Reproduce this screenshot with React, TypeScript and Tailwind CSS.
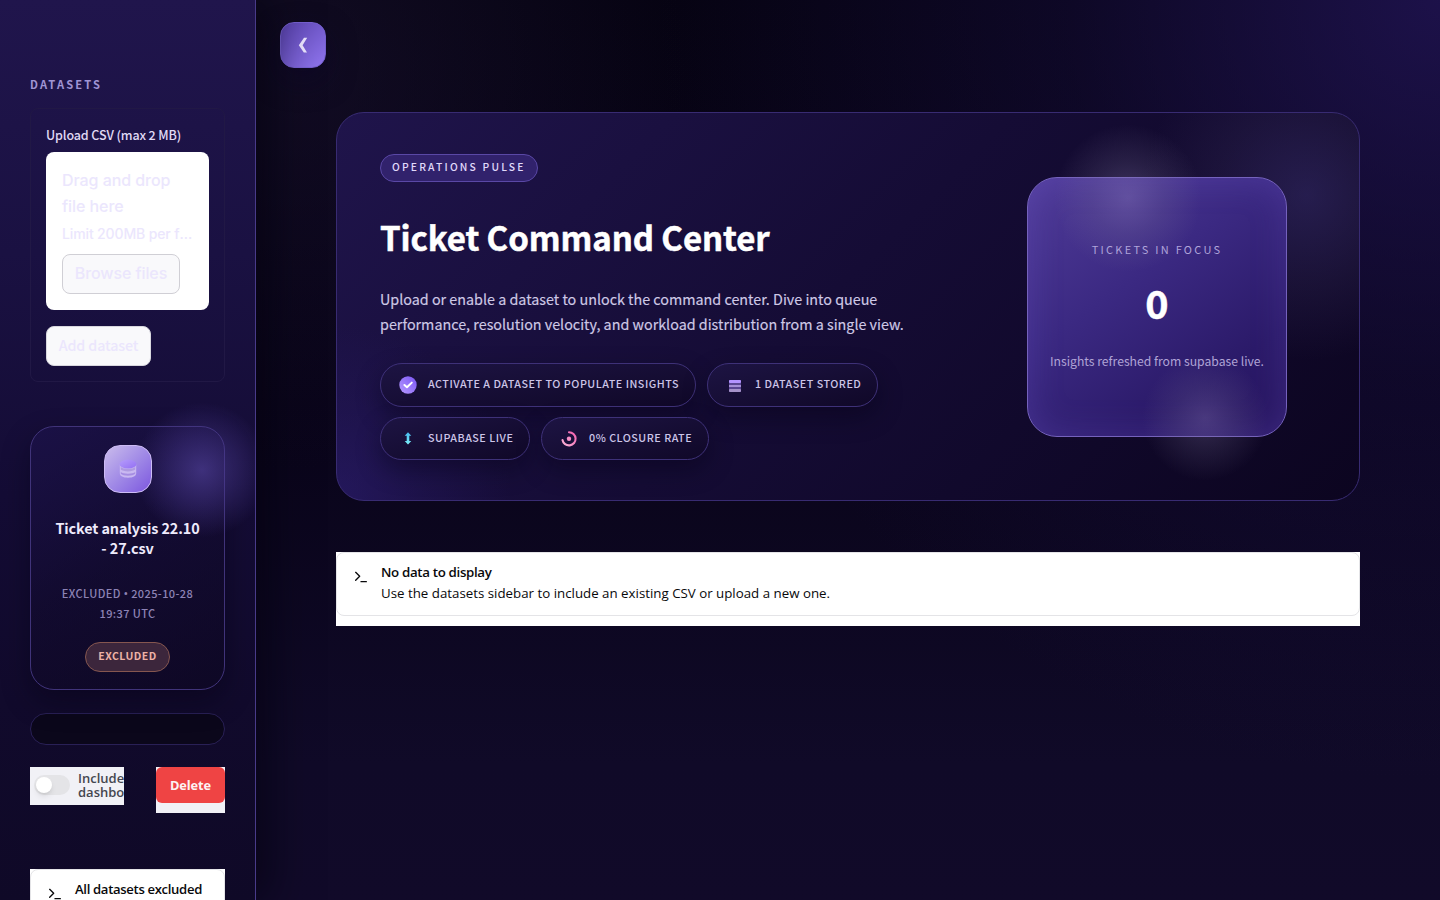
import React from "react";

const source = "font-['Noto_Sans_CJK_SC',sans-serif]";
const noto = "font-['Open_Sans','Noto_Sans',sans-serif]";

function CheckIcon() {
  return (
    <svg width="18" height="18" viewBox="0 0 18 18">
      <defs>
        <linearGradient id="chk" x1="0" y1="1" x2="1" y2="0">
          <stop offset="0" stopColor="#b79bff" />
          <stop offset="1" stopColor="#7a55f6" />
        </linearGradient>
      </defs>
      <circle cx="9" cy="9" r="8.7" fill="url(#chk)" />
      <path d="M5.4 9 L8 11.3 L12.8 6.6" fill="none" stroke="#fff" strokeWidth="2" strokeLinecap="round" strokeLinejoin="round" />
    </svg>
  );
}

function StackIcon() {
  return (
    <svg width="12" height="12" viewBox="0 0 12 12" className="mt-[2px]">
      <rect width="12" height="12" rx="1" fill="#5a4694" />
      <rect width="12" height="3" rx="1" fill="#b393ff" />
      <rect y="5" width="12" height="2" fill="#a48fd6" />
      <rect y="9" width="12" height="3" rx="1" fill="#a592c9" />
    </svg>
  );
}

function ArrowsIcon() {
  return (
    <svg width="18" height="18" viewBox="0 0 18 18">
      <defs>
        <linearGradient id="arr" x1="0" y1="0" x2="0" y2="1">
          <stop offset="0" stopColor="#44b9ee" />
          <stop offset="1" stopColor="#7ff0f8" />
        </linearGradient>
      </defs>
      <path d="M9 2.2 L12.3 5.8 H10.3 V11 H12.3 L9 14.6 L5.7 11 H7.7 V5.8 H5.7 Z" fill="url(#arr)" />
    </svg>
  );
}

function RateIcon() {
  return (
    <svg width="18" height="18" viewBox="0 0 18 18">
      <defs>
        <linearGradient id="rate" x1="1" y1="0" x2="0" y2="1">
          <stop offset="0" stopColor="#f45fae" />
          <stop offset="1" stopColor="#fbb4d8" />
        </linearGradient>
      </defs>
      <path d="M9 2.2 A6.6 6.6 0 1 1 2.5 10" fill="none" stroke="url(#rate)" strokeWidth="2.1" strokeLinecap="round" />
      <circle cx="9" cy="8.8" r="2.2" fill="#f88fc6" />
    </svg>
  );
}

function DatabaseIcon() {
  return (
    <svg width="18" height="20" viewBox="0 0 18 20">
      <defs>
        <linearGradient id="dbtop" x1="0" y1="0" x2="1" y2="1">
          <stop offset="0" stopColor="#b59cfb" />
          <stop offset="1" stopColor="#936ff3" />
        </linearGradient>
      </defs>
      <path d="M0.8 5 V14.6 C1 17 4 18.8 9 18.8 C14 18.8 17 17 17.2 14.6 V5 Z" fill="#c9b8f1" />
      <path d="M1.8 8 C4 10.6 14 10.6 16.2 8 V10.6 C14 13 4 13 1.8 10.6 Z" fill="#ae9ae0" />
      <path d="M1.8 13 C4 15.2 14 15.2 16.2 13 V14.8 C14 17.4 4 17.4 1.8 14.8 Z" fill="#a68de2" />
      <ellipse cx="9" cy="5.2" rx="8.4" ry="4.4" fill="url(#dbtop)" />
    </svg>
  );
}

function TerminalIcon() {
  return (
    <svg width="16" height="16" viewBox="0 0 24 24" fill="none" stroke="#09090b" strokeWidth="2" strokeLinecap="round" strokeLinejoin="round">
      <polyline points="4 17 10 11 4 5" />
      <line x1="12" x2="20" y1="19" y2="19" />
    </svg>
  );
}

function Pill({ icon, children, className }: { icon: React.ReactNode; children: React.ReactNode; className: string }) {
  return (
    <div className={`flex items-center rounded-[22px] border border-[#3e3178] bg-linear-to-br from-[#1d1443] to-[#100828] pl-[18px] shadow-[0_10px_24px_rgba(6,2,20,0.4)] ${className}`}>
      <span className="flex w-[18px] justify-center">{icon}</span>
      <span className="ml-[11px] pb-[2px] text-[10.74px] font-medium leading-[18px] tracking-[0.51px] whitespace-nowrap text-[#cdc5e8]">{children}</span>
    </div>
  );
}

function Sidebar() {
  return (
    <aside className="relative h-[900px] w-64 shrink-0 overflow-hidden border-r border-[#493b8a] bg-[linear-gradient(180deg,#20154c_0%,#1a1142_28%,#140c35_55%,#110a2c_78%,#0f0927_100%)] pr-[30px] pl-[30px] shadow-[12px_0_40px_rgba(4,1,14,0.6)]">
      <div className="relative flex flex-col">
        <h2 className="mt-[75px] text-[11.1px] font-bold leading-[18px] tracking-[2.15px] text-[#a094d4]">DATASETS</h2>
        <section className="mt-[15px] flex h-[274px] flex-col items-start rounded-lg border border-[#211845] px-[15px]">
          <div className="mt-[16px] text-[12.5px] font-medium leading-5 tracking-[-0.12px] text-[#e0daf5]">Upload CSV (max 2 MB)</div>
          <div className="mt-[7px] h-[158px] w-[163px] rounded-lg bg-white px-4 pt-[15px] font-['Inter',sans-serif] font-medium text-[#ebe6fd]">
            <div className="text-[16px] leading-[26px] tracking-[-0.06px]">Drag and drop<br />file here</div>
            <div className="mt-px truncate text-[14px] leading-[28px] tracking-[-0.13px]">Limit 200MB per file • CSV</div>
            <div className="mt-[6px] flex h-10 w-[118px] items-center justify-center rounded-lg border border-[#d0cfd5] bg-[#f9f9fb] pb-[2px] text-[16px] tracking-[-0.1px]">Browse files</div>
          </div>
          <div className="mt-4 flex h-10 w-[105px] items-center justify-center rounded-lg border border-[#d8d7de] bg-[#f9f9fb] pb-[2px] text-[14.3px] font-medium tracking-[-0.15px] text-[#ebe6fd]">Add dataset</div>
        </section>
        <section className="relative mt-[44px] flex h-[264px] flex-col items-center rounded-[24px] border border-[#403379] bg-[linear-gradient(150deg,rgba(28,18,74,0.75)_0%,rgba(17,10,44,0.3)_50%,rgba(13,7,34,0.7)_100%)] text-center shadow-[0_12px_28px_rgba(5,2,18,0.4)]">
          <div className="pointer-events-none absolute top-[-32px] left-[96px] h-[150px] w-[150px] rounded-full bg-[radial-gradient(circle_closest-side,rgba(78,62,150,0.72)_0%,rgba(70,54,140,0.42)_45%,rgba(60,45,130,0)_90%)]" />
          <div className="relative mt-[18px] flex h-12 w-12 items-center justify-center rounded-2xl border border-[#cdbcf5] bg-linear-to-br from-[#cbbceb] to-[#7d55de]">
            <DatabaseIcon />
          </div>
          <h3 className="relative mt-[25px] text-[14.4px] font-bold leading-5 tracking-[-0.1px] text-[#eeeafc]">Ticket analysis 22.10<br />- 27.csv</h3>
          <p className="mt-[25px] text-[11px] font-medium leading-5 tracking-[0.4px] text-[#8d83b5]">EXCLUDED <span className="font-['Noto_Sans',sans-serif] leading-none">•</span> 2025-10-28<br />19:37 UTC</p>
          <div className="mt-[19px] flex h-[30px] w-[85px] items-center justify-center rounded-full border border-[#85564f] bg-[#3c263c] pb-[2px] text-[10.5px] font-bold tracking-[0.5px] text-[#eeb2a6]">EXCLUDED</div>
        </section>
        <div className="mt-[23px] h-8 rounded-2xl border border-[#292056] bg-[#0b071b]" />
        <div className="mt-[22px] flex items-start justify-between">
          <div className={`${noto} flex h-[38px] w-[94px] items-start overflow-hidden bg-[#f1f1f6] pl-1`}>
            <div className="mt-2 h-5 w-9 shrink-0 rounded-full bg-[#e4e4e7] p-[2px]">
              <div className="h-4 w-4 rounded-full bg-white shadow-md" />
            </div>
            <div className="mt-[4px] ml-2 text-[13px] font-semibold leading-[14px] whitespace-nowrap text-[#45474f]">Include in<br />dashboard</div>
          </div>
          <div className={`${noto} h-[46px] w-[69px] bg-[#f1f1f6]`}>
            <div className="flex h-9 items-center justify-center rounded-md bg-[#ef4444] pt-px text-[12.8px] font-bold tracking-[-0.1px] text-[#fdf3f3]">Delete</div>
          </div>
        </div>
        <div className={`${noto} mt-[56px] h-[80px] bg-white text-[#09090b]`}>
          <div className="flex h-[80px] rounded-lg border border-[#e4e4e7] pl-4">
            <div className="mt-4"><TerminalIcon /></div>
            <div className="mt-[11px] ml-3 text-[13.1px] font-semibold leading-[17px] tracking-tight">All datasets excluded</div>
          </div>
        </div>
      </div>
    </aside>
  );
}

function Hero() {
  return (
    <section className="relative flex h-[389px] overflow-hidden rounded-[28px] border border-[#382b72] bg-[radial-gradient(circle_at_0%_100%,rgba(46,31,120,0.5)_0%,rgba(46,31,120,0.22)_8%,rgba(46,31,120,0)_16%),radial-gradient(circle_at_970px_82px,rgba(64,54,122,0.45)_0%,rgba(60,50,100,0.24)_90px,rgba(50,40,90,0)_165px),linear-gradient(135deg,#1f144b_0%,#150c35_48%,#0c0520_100%)]">
      <div className="w-[647px] pl-[43px]">
        <div className="mt-[41px] flex h-7 w-[158px] items-center rounded-full border border-[#5a48a6] bg-[#31226c] pb-[2px] pl-[11px] text-[10.3px] font-medium tracking-[2.2px] whitespace-nowrap text-[#e0d9fb]">OPERATIONS PULSE</div>
        <h1 className="mt-[30px] text-[33px] font-bold leading-[50px] tracking-[-0.08px] text-white [-webkit-text-stroke:0.5px_#fff]">Ticket Command Center</h1>
        <p className="mt-[24px] text-[14.34px] leading-[25px] whitespace-nowrap text-[#cfc9e6] [-webkit-text-stroke:0.15px_#cfc9e6]">
          Upload or enable a dataset to unlock the command center. Dive into queue<br />
          performance, resolution velocity, and workload distribution from a single view.
        </p>
        <div className="mt-[27px] flex gap-[11px]">
          <Pill className="h-11 w-[316px]" icon={<CheckIcon />}>ACTIVATE A DATASET TO POPULATE INSIGHTS</Pill>
          <Pill className="h-11 w-[171px]" icon={<StackIcon />}>1 DATASET STORED</Pill>
        </div>
        <div className="mt-[10px] flex gap-[11px]">
          <Pill className="h-[43px] w-[150px]" icon={<ArrowsIcon />}>SUPABASE LIVE</Pill>
          <Pill className="h-[43px] w-[168px]" icon={<RateIcon />}>0% CLOSURE RATE</Pill>
        </div>
      </div>
      <div className="relative mt-[64px] ml-[43px] flex h-[260px] w-[260px] flex-col items-center rounded-[30px] border border-[#7562bd] bg-[linear-gradient(145deg,#503c99_0%,#3b2982_40%,#2b1a69_75%,#27155f_100%)] text-center shadow-[inset_0_0_34px_rgba(120,95,215,0.25)]">
        <div className="pointer-events-none absolute top-[-60px] left-[20px] h-[160px] w-[160px] rounded-full bg-[radial-gradient(circle_closest-side,rgba(150,135,190,0.34)_0%,rgba(130,120,160,0.19)_45%,rgba(120,110,150,0)_92%)]" />
        <div className="pointer-events-none absolute top-[172px] left-[109px] h-[136px] w-[136px] rounded-full bg-[radial-gradient(circle_closest-side,rgba(135,120,170,0.32)_0%,rgba(120,110,150,0.18)_45%,rgba(110,100,140,0)_92%)]" />
        <div className="relative mt-[61px] text-[11px] leading-5 tracking-[2.25px] text-[#b0a4da]">TICKETS IN FOCUS</div>
        <div className="relative mt-[18px] text-[39.5px] font-bold leading-[50px] text-white [-webkit-text-stroke:0.5px_#fff]">0</div>
        <div className="relative mt-[24px] text-[12.2px] leading-5 whitespace-nowrap text-[#b0a4d6]">Insights refreshed from supabase live.</div>
      </div>
    </section>
  );
}

export default function App() {
  return (
    <div className={`${source} flex h-[900px] w-[1440px] overflow-hidden bg-[radial-gradient(circle_at_100%_0%,rgba(36,22,92,0.75)_0%,rgba(28,17,75,0.35)_22%,rgba(20,12,55,0)_46%),radial-gradient(circle_at_20%_8%,rgba(28,20,50,0.5)_0%,rgba(20,12,40,0)_28%),linear-gradient(180deg,#060312_0%,#090419_45%,#100a28_85%,#110a29_100%)]`}>
      <Sidebar />
      <main className="flex flex-1 flex-col px-[80px]">
        <div className="mt-[22px] -ml-14 flex h-[46px] w-[46px] items-center justify-center rounded-[14px] border border-[#7560cf] bg-linear-to-br from-[#5841ac] to-[#9176ef] shadow-[0_12px_28px_rgba(12,6,40,0.5)]">
          <svg width="10" height="16" viewBox="0 0 10 16">
            <path d="M6 0.8 H9.2 L4.6 8.2 L9 15.4 H5.8 L0.8 8.2 Z" fill="#e9e3fc" />
          </svg>
        </div>
        <div className="mt-[44px]"><Hero /></div>
        <div className={`${noto} mt-[51px] h-[74px] bg-white text-[#09090b]`}>
          <div className="flex h-16 rounded-lg border border-[#e4e4e7] pl-4">
            <div className="mt-4"><TerminalIcon /></div>
            <div className="ml-3">
              <div className="mt-[11px] text-[13.3px] font-semibold leading-[17px] tracking-tight">No data to display</div>
              <div className="mt-[2px] text-[13.3px] leading-5">Use the datasets sidebar to include an existing CSV or upload a new one.</div>
            </div>
          </div>
        </div>
      </main>
    </div>
  );
}
